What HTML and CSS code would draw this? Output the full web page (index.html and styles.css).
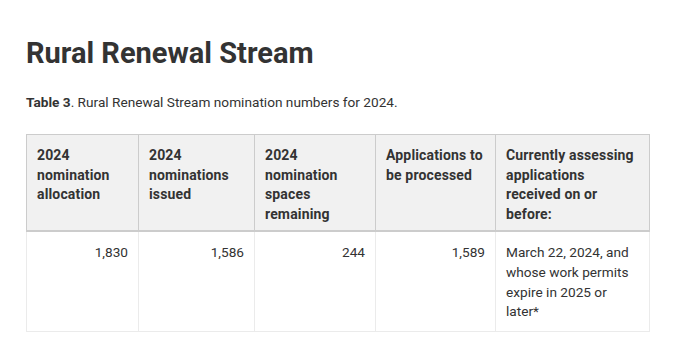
FILE: index.html
```html
<!DOCTYPE html>
<html lang="en">
<head>
<meta charset="utf-8">
<title>Rural Renewal Stream</title>
<link rel="stylesheet" href="styles.css">
</head>
<body>
<main class="page">
  <h2 class="title">Rural Renewal Stream</h2>
  <p class="caption"><strong>Table 3</strong>. Rural Renewal Stream nomination numbers for 2024.</p>
  <table class="data">
    <colgroup>
      <col class="c1"><col class="c2"><col class="c3"><col class="c4"><col class="c5">
    </colgroup>
    <thead>
      <tr>
        <th>2024 nomination allocation</th>
        <th>2024 nominations issued</th>
        <th>2024 nomination spaces remaining</th>
        <th>Applications to be processed</th>
        <th>Currently assessing applications received on or before:</th>
      </tr>
    </thead>
    <tbody>
      <tr>
        <td class="num">1,830</td>
        <td class="num">1,586</td>
        <td class="num">244</td>
        <td class="num">1,589</td>
        <td>March 22, 2024, and whose work permits expire in 2025 or later*</td>
      </tr>
    </tbody>
  </table>
</main>
</body>
</html>
```
FILE: styles.css
```css
html, body {
  margin: 0;
  padding: 0;
  background: #fff;
}
body {
  font-family: Roboto, "Liberation Sans", sans-serif;
  color: #333;
}
.page {
  padding: 36px 26px 0 26px;
}
.title {
  margin: 0;
  font-size: 29px;
  font-weight: 700;
  line-height: 34px;
  color: #333;
}
.caption {
  margin: 22px 0 0 0;
  font-size: 13.65px;
  line-height: 20px;
  color: #333;
}
.caption strong {
  font-weight: 700;
}
.data {
  margin-top: 22px;
  border-collapse: collapse;
  table-layout: fixed;
  width: 623px;
  font-size: 13.65px;
  line-height: 19.6px;
}
.c1 { width: 112px; }
.c2 { width: 116px; }
.c3 { width: 121px; }
.c4 { width: 120px; }
.c5 { width: 154px; }
.data th {
  background: #f1f1f1;
  border: 1px solid #ccc;
  border-bottom: 2px solid #ccc;
  text-align: left;
  vertical-align: top;
  font-size: 14px;
  letter-spacing: 0.15px;
  font-weight: 700;
  padding: 11px 10px 6px 10px;
}
.data td {
  border: 1px solid #ebebeb;
  vertical-align: top;
  padding: 11px 10px 9px 10px;
}
.data td.num {
  text-align: right;
}
```
